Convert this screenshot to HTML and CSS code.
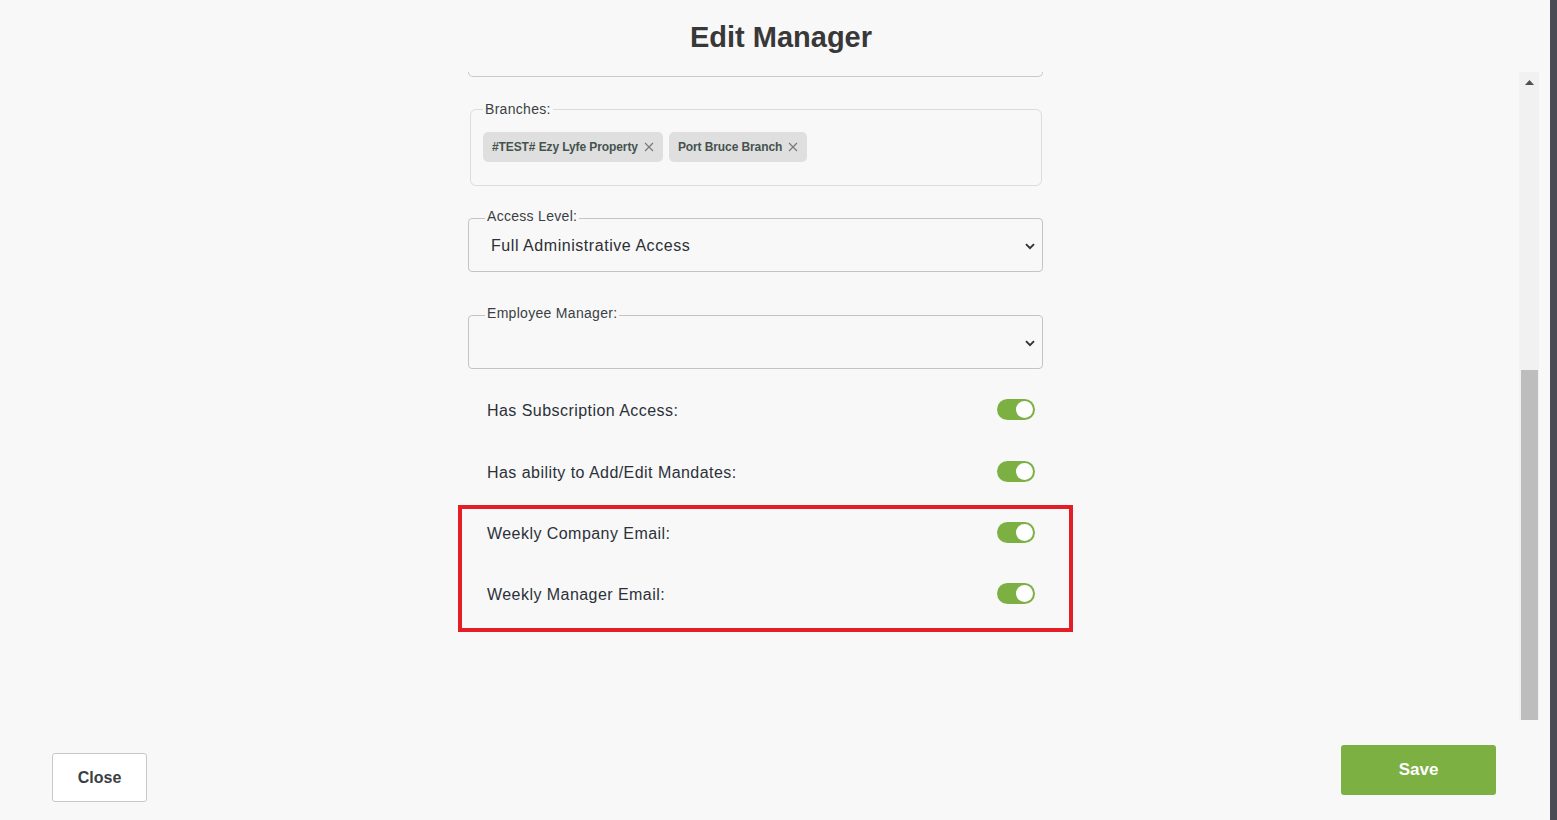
FILE: index.html
```html
<!DOCTYPE html>
<html>
<head>
<meta charset="utf-8">
<link rel="stylesheet" href="styles.css">
</head>
<body>
<div class="app">
  <div class="modal">
    <header class="head"><h1 class="title">Edit Manager</h1></header>
    <div class="body">
      <div class="scroll">
        <div class="form">
          <div class="clipped"></div>

          <fieldset class="field field-branches">
            <legend class="legend">Branches:</legend>
            <div class="chips">
              <span class="chip">#TEST# Ezy Lyfe Property
                <svg class="chip-x" viewBox="0 0 10 10" width="10" height="10"><path d="M1 1L9 9M9 1L1 9" stroke="#777" stroke-width="1.1" fill="none"/></svg>
              </span>
              <span class="chip">Port Bruce Branch
                <svg class="chip-x" viewBox="0 0 10 10" width="10" height="10"><path d="M1 1L9 9M9 1L1 9" stroke="#777" stroke-width="1.1" fill="none"/></svg>
              </span>
            </div>
          </fieldset>

          <fieldset class="field field-select field-access">
            <legend class="legend legend-sel">Access Level:</legend>
            <div class="select">
              <span class="select-text">Full Administrative Access</span>
              <svg class="chev" viewBox="0 0 10 7" width="10" height="7"><path d="M1 1.2L5 5.2L9 1.2" stroke="#333" stroke-width="1.9" fill="none"/></svg>
            </div>
          </fieldset>

          <fieldset class="field field-select field-emp">
            <legend class="legend legend-sel">Employee Manager:</legend>
            <div class="select">
              <span class="select-text"></span>
              <svg class="chev" viewBox="0 0 10 7" width="10" height="7"><path d="M1 1.2L5 5.2L9 1.2" stroke="#333" stroke-width="1.9" fill="none"/></svg>
            </div>
          </fieldset>

          <div class="toggles">
            <div class="row"><span class="row-label">Has Subscription Access:</span><span class="switch"><span class="knob"></span></span></div>
            <div class="row"><span class="row-label">Has ability to Add/Edit Mandates:</span><span class="switch"><span class="knob"></span></span></div>
            <div class="highlight">
              <div class="row"><span class="row-label">Weekly Company Email:</span><span class="switch"><span class="knob"></span></span></div>
              <div class="row"><span class="row-label">Weekly Manager Email:</span><span class="switch"><span class="knob"></span></span></div>
            </div>
          </div>
        </div>
      </div>
      <div class="scrollbar">
        <div class="sb-track">
          <svg class="sb-arrow" viewBox="0 0 9 5" width="9" height="5"><path d="M0 5L4.5 0L9 5Z" fill="#505050"/></svg>
          <div class="sb-space"></div>
          <div class="sb-thumb"></div>
        </div>
      </div>
    </div>
    <footer class="foot">
      <button class="btn btn-close">Close</button>
      <button class="btn btn-save">Save</button>
    </footer>
  </div>
  <div class="edge"></div>
</div>
</body>
</html>
```
FILE: styles.css
```css
* { box-sizing: border-box; }
html, body { margin: 0; padding: 0; height: 100%; }
body {
  font-family: "Liberation Sans", Arial, sans-serif;
  color: #2f343a;
  background: #f8f8f8;
  overflow: hidden;
}
.app { display: flex; height: 820px; width: 1557px; }
.modal { flex: 1; display: flex; flex-direction: column; background: #f8f8f8; }
.edge { width: 7px; background: #4b4b53; }

.head { height: 72px; display: flex; justify-content: center; padding-top: 19px; }
.title { margin: 0; font-size: 29px; font-weight: 700; color: #383838; line-height: 36px; padding-left: 12px; }

.body { height: 648px; display: flex; }
.scroll { flex: 1; overflow: hidden; }
.form { width: 575px; margin-left: 468px; display: flex; flex-direction: column; }

.clipped {
  height: 5px;
  border: 1px solid #c9c9c9;
  border-top: none;
  border-radius: 0 0 5px 5px;
}

.field { margin: 0; border: 1px solid #c4c4c4; border-radius: 4px; padding: 0 16px; min-width: 0; }
.legend { padding: 0 2px; font-size: 14px; line-height: 16px; color: #3a3f44; letter-spacing: 0.3px; }
.legend-sel { padding-bottom: 4px; }

.field-branches { margin: 24px 1px 0 2px; border-color: #dcdcdc; border-radius: 6px; padding: 15px 12px 23px 12px; }
.chips { display: flex; gap: 6px; }
.chip {
  display: inline-flex; align-items: center; gap: 6px;
  height: 30px; padding: 0 9px;
  background: #dfdfdf; border-radius: 5px;
  font-size: 12px; font-weight: 700; color: #45534e; letter-spacing: -0.1px;
}
.chip-x { display: block; }

.field-access { margin-top: 22px; }
.field-emp { margin-top: 33px; }
.select { display: flex; align-items: center; justify-content: space-between; height: 43px; padding: 0 2px 7px 6px; }
.select-text { font-size: 16px; color: #2c2f33; letter-spacing: 0.55px; }
.chev { display: block; margin-right: -11px; margin-top: 1px; }

.toggles { display: flex; flex-direction: column; gap: 12px; margin-top: 15px; }
.row { display: flex; align-items: center; justify-content: space-between; height: 50px; padding: 0 8px 0 19px; }
.row-label { font-size: 16px; color: #2c3138; padding-top: 3px; letter-spacing: 0.45px; }
.switch {
  width: 38px; height: 21px; border-radius: 11px; background: #7cb043;
  display: flex; align-items: center; justify-content: flex-end; padding-right: 2px;
}
.knob { width: 17px; height: 17px; border-radius: 50%; background: #fff; }

.highlight {
  margin: -3px 0 0 -10px; width: 615px;
  border: 4px solid #e41e26;
  display: flex; flex-direction: column; gap: 11px;
  padding: 0 0 10px;
}
.highlight .row { padding: 0 34px 0 25px; }
.highlight .row:first-child { margin-top: -2px; }

.scrollbar { width: 31px; display: flex; padding-right: 11px; }
.sb-track { width: 20px; background: #f1f1f1; display: flex; flex-direction: column; align-items: center; }
.sb-arrow { margin-top: 8px; display: block; }
.sb-space { flex: 1; }
.sb-thumb { width: 17px; height: 350px; background: #bdbdbd; }

.foot { flex: 1; display: flex; justify-content: space-between; align-items: flex-start; padding: 0 54px 0 52px; }
.btn { font-family: "Liberation Sans", Arial, sans-serif; font-weight: 700; cursor: pointer; }
.btn-close {
  margin-top: 33px; width: 95px; height: 49px;
  background: #fff; border: 1px solid #c8c8c8; border-radius: 3px;
  font-size: 16px; color: #3b3f44; padding-top: 2px;
}
.btn-save {
  margin-top: 25px; width: 155px; height: 50px;
  background: #7cb043; border: none; border-radius: 3px;
  font-size: 17px; color: #fff;
}
```
